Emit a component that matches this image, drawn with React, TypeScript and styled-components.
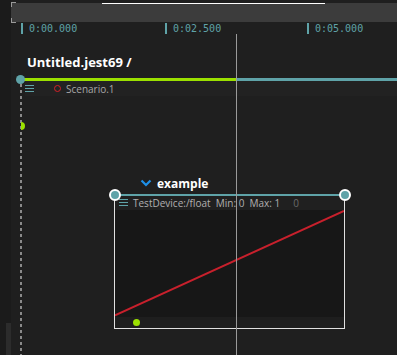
import React from "react";
import styled, { createGlobalStyle } from "styled-components";

const TEAL = "#5fa3a8";
const LIME = "#9be000";
const PLAYHEAD_X = 236;

const GlobalStyle = createGlobalStyle`
  html, body {
    margin: 0;
    padding: 0;
    background: #1f1f1f;
    overflow: hidden;
  }
  body {
    font-family: "Open Sans", "Noto Sans", sans-serif;
  }
`;

const ticks = [
  { x: 10, label: "0:00.000" },
  { x: 154, label: "0:02.500" },
  { x: 296, label: "0:05.000" },
];

const HamburgerIcon = () => (
  <svg width={9} height={8} viewBox="0 0 9 8">
    <path d="M0 0.5h9M0 3.5h9M0 6.5h9" stroke={TEAL} strokeWidth="1.2" />
  </svg>
);

const ChevronIcon = () => (
  <svg width="12" height="8" viewBox="0 0 12 8">
    <path d="M1.5 1.5l4.5 4.5 4.5-4.5" fill="none" stroke="#1e90e8" strokeWidth="2.2" />
  </svg>
);

const App = () => {
  return (
    <>
      <GlobalStyle />
      <Page>
        <LeftStrip>
          <ScrollThumb />
        </LeftStrip>
        <Main>
          <TopBar>
            <ScrollIndicator />
            <CornerTop />
            <CornerBottom />
          </TopBar>
          <Ruler>
            {ticks.map((t) => (
              <Tick key={t.label} style={{ left: t.x }}>
                {t.label}
              </Tick>
            ))}
          </Ruler>
          <Canvas>
            <Title>Untitled.jest69 /</Title>
            <TrackLine>
              <TrackKnob />
            </TrackLine>
            <ScenarioRow>
              <HamburgerIcon />
              <RecordDot />
              <ScenarioName>Scenario.1</ScenarioName>
            </ScenarioRow>
            <DashedGuide />
            <HalfDot />
            <Node>
              <NodeTitle>
                <ChevronIcon />
                <span>example</span>
              </NodeTitle>
              <NodeBar>
                <NodeKnob $side="left" />
                <NodeKnob $side="right" />
              </NodeBar>
              <NodeBody>
                <NodeHeader>
                  <HamburgerIcon />
                  <DeviceLabel>TestDevice:/float&nbsp; Min: 0&nbsp; Max: 1</DeviceLabel>
                  <ValueLabel>0</ValueLabel>
                </NodeHeader>
                <Chart>
                  <svg width="100%" height="100%" viewBox="0 0 228 106" preserveAspectRatio="none">
                    <line x1="0" y1="105" x2="228" y2="1" stroke="#c8202c" strokeWidth="2" />
                  </svg>
                </Chart>
                <NodeFooter>
                  <LimeDot />
                </NodeFooter>
              </NodeBody>
            </Node>
            <Playhead />
          </Canvas>
        </Main>
      </Page>
    </>
  );
};

const Page = styled.div`
  display: flex;
  width: 397px;
  height: 355px;
  background: #1f1f1f;
`;

const LeftStrip = styled.div`
  position: relative;
  width: 11px;
  flex: none;
  background: #1b1b1b;
`;

const ScrollThumb = styled.div`
  position: absolute;
  left: 6px;
  bottom: 0;
  width: 5px;
  height: 32px;
  background: #2c2c2c;
`;

const Main = styled.div`
  flex: 1;
  display: flex;
  flex-direction: column;
  min-width: 0;
`;

const TopBar = styled.div`
  position: relative;
  height: 19px;
  margin-top: 3px;
  background: #3c3c3c;
`;

const ScrollIndicator = styled.div`
  position: absolute;
  top: 0;
  left: 91px;
  width: 223px;
  height: 1px;
  background: #ffffff;
`;

const CornerTop = styled.div`
  position: absolute;
  left: 0;
  top: -1px;
  width: 4px;
  height: 4px;
  border-top: 1px solid #9a9a9a;
  border-left: 1px solid #9a9a9a;
`;

const CornerBottom = styled.div`
  position: absolute;
  left: 0;
  bottom: -1px;
  width: 4px;
  height: 4px;
  border-bottom: 1px solid #9a9a9a;
  border-left: 1px solid #9a9a9a;
`;

const Ruler = styled.div`
  position: relative;
  height: 12px;
`;

const Tick = styled.div`
  position: absolute;
  top: 1px;
  height: 11px;
  padding-left: 6px;
  border-left: 2px solid ${TEAL};
  font-family: "DejaVu Sans Mono", monospace;
  font-size: 10px;
  line-height: 11px;
  color: ${TEAL};
`;

const Canvas = styled.div`
  position: relative;
  flex: 1;
  padding-top: 19px;
`;

const Title = styled.div`
  margin-left: 16px;
  height: 18px;
  font-size: 13px;
  font-weight: 700;
  line-height: 18px;
  color: #ffffff;
`;

const TrackLine = styled.div`
  position: relative;
  margin-top: 7px;
  margin-left: 9px;
  height: 3px;
  background: linear-gradient(
    to right,
    ${LIME} 0,
    ${LIME} ${PLAYHEAD_X - 20}px,
    ${TEAL} ${PLAYHEAD_X - 20}px
  );
`;

const TrackKnob = styled.div`
  position: absolute;
  left: -4px;
  top: -3px;
  width: 9px;
  height: 9px;
  border-radius: 50%;
  background: ${TEAL};
`;

const ScenarioRow = styled.div`
  display: flex;
  align-items: center;
  height: 15px;
  margin-left: 14px;
  background: #222222;
`;

const RecordDot = styled.div`
  width: 5px;
  height: 5px;
  margin-left: 20px;
  border: 1.6px solid #d42028;
  border-radius: 50%;
`;

const ScenarioName = styled.span`
  margin-left: 5px;
  font-size: 10px;
  color: #a8a8a8;
`;

const DashedGuide = styled.div`
  position: absolute;
  left: 9px;
  top: 50px;
  bottom: 0;
  width: 2px;
  background: repeating-linear-gradient(to bottom, #8a8a8a 0 3px, transparent 3px 6px);
`;

const HalfDot = styled.div`
  position: absolute;
  left: 10px;
  top: 88px;
  width: 4px;
  height: 8px;
  border-radius: 0 4px 4px 0;
  background: ${LIME};
`;

const Node = styled.div`
  position: absolute;
  left: 103px;
  top: 141px;
  width: 231px;
  display: flex;
  flex-direction: column;
`;

const NodeTitle = styled.div`
  display: flex;
  align-items: center;
  gap: 5px;
  height: 16px;
  margin-left: 26px;
  font-size: 12px;
  font-weight: 700;
  color: #ffffff;
`;

const NodeBar = styled.div`
  position: relative;
  height: 2px;
  margin-top: 3px;
  background: ${TEAL};
`;

const NodeKnob = styled.div<{ $side: "left" | "right" }>`
  position: absolute;
  top: -5px;
  ${(p) => (p.$side === "left" ? "left: -5px;" : "right: -6px;")}
  width: 8px;
  height: 8px;
  border-radius: 50%;
  border: 2px solid #ffffff;
  background: ${TEAL};
`;

const NodeBody = styled.div`
  display: flex;
  flex-direction: column;
  height: 132px;
  border: 1px solid #e0e0e0;
  border-top: none;
  background: #1d1d1d;
`;

const NodeHeader = styled.div`
  display: flex;
  align-items: center;
  height: 15px;
  padding-left: 4px;
  background: #202020;
`;

const DeviceLabel = styled.span`
  margin-left: 5px;
  font-size: 10px;
  color: #b0b0b0;
  white-space: nowrap;
`;

const ValueLabel = styled.span`
  margin-left: 13px;
  font-size: 10px;
  color: #6a6a6a;
`;

const Chart = styled.div`
  flex: 1;
  background: #171717;
  svg {
    display: block;
  }
`;

const NodeFooter = styled.div`
  display: flex;
  align-items: center;
  height: 12px;
  padding-left: 18px;
  background: #1e1e1e;
`;

const LimeDot = styled.div`
  width: 7px;
  height: 7px;
  border-radius: 50%;
  background: ${LIME};
`;

const Playhead = styled.div`
  position: absolute;
  left: ${PLAYHEAD_X - 11}px;
  top: 0;
  bottom: 0;
  width: 1px;
  background: #9a9a9a;
`;

export default App;
